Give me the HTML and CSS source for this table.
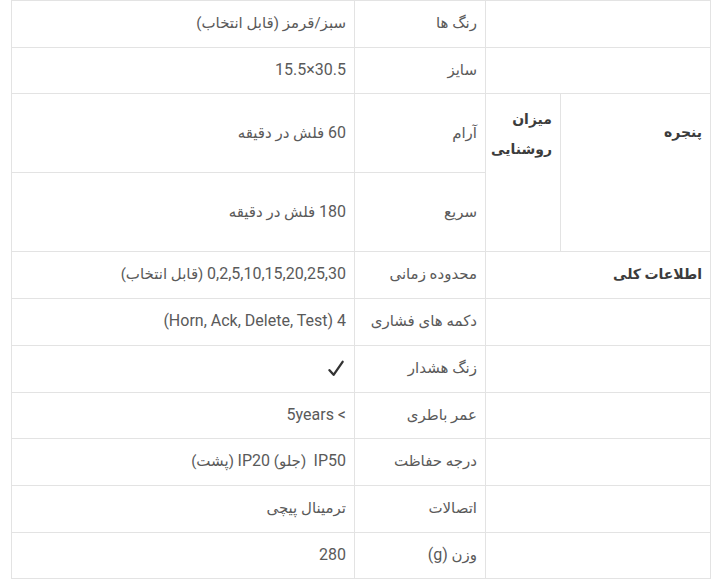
FILE: index.html
```html
<!DOCTYPE html>
<html lang="fa" dir="rtl">
<head>
<meta charset="utf-8">
<title>مشخصات</title>
<link rel="stylesheet" href="styles.css">
</head>
<body>
<div class="wrap">
<table class="spec">
  <colgroup>
    <col class="c-group">
    <col class="c-sub">
    <col class="c-label">
    <col class="c-value">
  </colgroup>
  <tbody>
    <tr>
      <td class="empty" colspan="2"></td>
      <td class="label">رنگ ها</td>
      <td class="value">سبز/قرمز (قابل انتخاب)</td>
    </tr>
    <tr>
      <td class="empty" colspan="2"></td>
      <td class="label">سایز</td>
      <td class="value"><span class="en" dir="ltr">15.5×30.5</span></td>
    </tr>
    <tr class="tall">
      <th class="group group-window" rowspan="2">پنجره</th>
      <th class="group group-sub" rowspan="2">میزان<br>روشنایی</th>
      <td class="label">آرام</td>
      <td class="value"><span class="en">60</span> فلش در دقیقه</td>
    </tr>
    <tr class="tall">
      <td class="label">سریع</td>
      <td class="value"><span class="en">180</span> فلش در دقیقه</td>
    </tr>
    <tr>
      <th class="group" colspan="2">اطلاعات کلی</th>
      <td class="label">محدوده زمانی</td>
      <td class="value"><span class="en">0,2,5,10,15,20,25,30</span> (قابل انتخاب)</td>
    </tr>
    <tr>
      <td class="empty" colspan="2"></td>
      <td class="label">دکمه های فشاری</td>
      <td class="value"><span class="en">4 (Horn, Ack, Delete, Test)</span></td>
    </tr>
    <tr>
      <td class="empty" colspan="2"></td>
      <td class="label">زنگ هشدار</td>
      <td class="value"><svg class="check" width="16" height="17" viewBox="0 0 16 17" aria-label="✓"><path d="M1.5 10.2 L5.6 14.8 L14.6 1.8" fill="none" stroke="#333" stroke-width="2.3" stroke-linecap="round" stroke-linejoin="round"/></svg></td>
    </tr>
    <tr>
      <td class="empty" colspan="2"></td>
      <td class="label">عمر باطری</td>
      <td class="value"><span class="en" dir="ltr">5years &lt;</span></td>
    </tr>
    <tr>
      <td class="empty" colspan="2"></td>
      <td class="label">درجه حفاظت</td>
      <td class="value"><span class="en">IP50</span>&nbsp; (جلو) <span class="en">IP20</span> (پشت)</td>
    </tr>
    <tr>
      <td class="empty" colspan="2"></td>
      <td class="label">اتصالات</td>
      <td class="value">ترمینال پیچی</td>
    </tr>
    <tr>
      <td class="empty" colspan="2"></td>
      <td class="label">وزن <span class="en">(g)</span></td>
      <td class="value"><span class="en">280</span></td>
    </tr>
  </tbody>
</table>
</div>
</body>
</html>
```
FILE: styles.css
```css
html, body {
  margin: 0;
  padding: 0;
  background: #ffffff;
}

body {
  font-family: Roboto, "DejaVu Sans", sans-serif;
  font-size: 15px;
  color: #5a5a5a;
}

.wrap {
  direction: ltr;
  padding-left: 11px;
}

.spec {
  direction: rtl;
  width: 699px;
  border-collapse: collapse;
  table-layout: fixed;
  border: 1px solid #e3e3e3;
}

.c-group { width: 150px; }
.c-sub { width: 75px; }
.c-label { width: 131px; }
.c-value { width: 343px; }

.spec td,
.spec th {
  border: 1px solid #e3e3e3;
  padding: 12px 8px;
  line-height: 21.7px;
  text-align: right;
  vertical-align: middle;
  font-weight: normal;
}

.en {
  font-family: Roboto, sans-serif;
  font-size: 16px;
  line-height: 14px;
}

.spec tr.tall td {
  height: 54px;
}

.spec th.group {
  font-size: 14px;
  font-weight: bold;
  color: #3c3c3c;
  vertical-align: top;
}

.spec th.group-window {
  padding-top: 28px;
}

.spec th.group-sub {
  line-height: 30px;
  padding-top: 10px;
}

.check {
  display: inline-block;
  vertical-align: middle;
  margin: -3px 2px -3px 0;
}
```
